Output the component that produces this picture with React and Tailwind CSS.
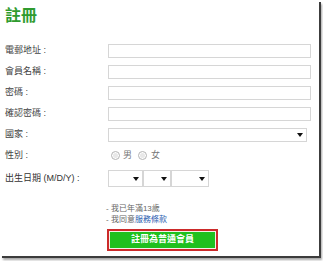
import React from "react";

const font = { fontFamily: '"Liberation Sans", "Noto Sans CJK TC", sans-serif' };

function Arrow() {
  return (
    <svg width="6" height="4" viewBox="0 0 6 4" className="block">
      <path d="M0 0H6L3 4Z" fill="#111" />
    </svg>
  );
}

function Radio() {
  return (
    <span className="inline-block w-[9px] h-[9px] rounded-full border border-[#b8b8b8] bg-[#e8e8e8] shadow-[inset_0_0_0_1px_#fff]" />
  );
}

function Row({ label, children }) {
  return (
    <div className="flex items-center h-[21px]">
      <div className="w-[103px] text-[9px] text-[#444] leading-none">{label}</div>
      {children}
    </div>
  );
}

function Input({ w = "w-[203px]" }) {
  return <div className={`${w} h-[14px] border border-[#d6d6d6] bg-white`} />;
}

function Select({ w, h = "h-[14px]" }) {
  return (
    <div className={`${w} ${h} border border-[#d6d6d6] bg-white flex items-center justify-end pr-[3px]`}>
      <Arrow />
    </div>
  );
}

export default function App() {
  return (
    <div className="w-[323px] h-[261px] bg-white overflow-hidden" style={font}>
      <div className="w-[319px] h-[256px] bg-white shadow-[2px_2px_0_#3c3c3c,3px_4px_2px_#a8a8a8] pl-[5px] pt-[7px]">
        <h1 className="text-[16px] font-bold text-[#2f9b2f] leading-[17px]">註冊</h1>
        <div className="mt-[16px]">
          <Row label="電郵地址 :"><Input /></Row>
          <Row label="會員名稱 :"><Input /></Row>
          <Row label="密碼 :"><Input /></Row>
          <Row label="確認密碼 :"><Input /></Row>
          <Row label="國家 :"><Select w="w-[199px]" /></Row>
          <Row label="性別 :">
            <div className="flex items-center text-[9px] text-[#777] pl-[3px]">
              <Radio />
              <span className="ml-[3px]">男</span>
              <span className="ml-[6px] flex"><Radio /></span>
              <span className="ml-[4px]">女</span>
            </div>
          </Row>
          <div className="flex items-center h-[25px]">
            <div className="w-[103px] text-[9px] text-[#333] leading-none">出生日期 (M/D/Y) :</div>
            <div className="flex">
              <Select w="w-[35px]" h="h-[17px]" />
              <Select w="w-[28px]" h="h-[17px]" />
              <Select w="w-[38px]" h="h-[17px]" />
            </div>
          </div>
        </div>
        <div className="ml-[101px] mt-[12px] text-[8px] text-[#666] leading-[11px]">
          <div>- 我已年滿13歲</div>
          <div>- 我同意<span className="text-[#2a5db0]">服務條款</span></div>
        </div>
        <div className="ml-[102px] mt-[4px] w-[111px] h-[22px] border-2 border-[#cc2a2a] p-[1px] bg-[#f3f3e8]">
          <div className="w-full h-full bg-[#1ec01e] flex items-center justify-center text-white text-[9px] font-bold">
            註冊為普通會員
          </div>
        </div>
      </div>
    </div>
  );
}
